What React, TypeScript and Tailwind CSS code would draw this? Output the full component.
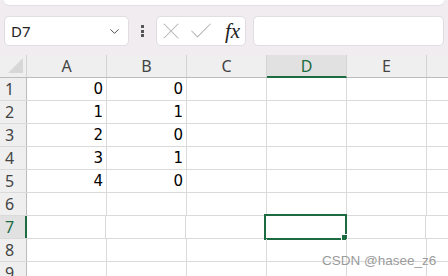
import { ChevronDown, X, Check } from "lucide-react";

const cols = ["A", "B", "C", "D", "E", "F"];
const data: Record<number, [string, string]> = {
  1: ["0", "0"],
  2: ["1", "1"],
  3: ["2", "0"],
  4: ["3", "1"],
  5: ["4", "0"],
};

function HeaderRow() {
  return (
    <div className="flex h-[23px] bg-[#efefef] border-b border-[#bcbcbc]">
      <div className="relative w-[27px] shrink-0 border-r border-[#d4d4d4]">
        <svg className="absolute left-[8px] top-[3px]" width="15" height="15" viewBox="0 0 15 15">
          <polygon points="15,0 15,15 0,15" fill="#d7d7d7" />
        </svg>
      </div>
      {cols.map((c) => (
        <div
          key={c}
          className={
            c === "D"
              ? "w-[80px] shrink-0 -mb-px flex items-center justify-center border-r border-[#d4d4d4] border-b-2 border-b-[#1d6b41] bg-[#e1e1e1] text-[#1d6b41]"
              : "w-[80px] shrink-0 flex items-center justify-center border-r border-[#d4d4d4] text-[#444]"
          }
        >
          {c}
        </div>
      ))}
    </div>
  );
}

function Row({ n }: { n: number }) {
  const vals = data[n];
  const active = n === 7;
  return (
    <div className="flex h-[23px] border-b border-[#dadada] bg-white">
      <div
        className={
          active
            ? "w-[27px] shrink-0 pl-[5px] flex items-center bg-[#e1e1e1] text-[#1d6b41] border-r-2 border-[#1d6b41] -mr-px"
            : "w-[27px] shrink-0 pl-[5px] flex items-center bg-[#efefef] text-[#444] border-r border-[#bcbcbc]"
        }
      >
        {n}
      </div>
      {cols.map((c, i) => (
        <div
          key={c}
          className="relative w-[80px] shrink-0 border-r border-[#dadada] flex items-center justify-end pr-[3px] text-black font-['DejaVu_Sans',sans-serif] text-[15px]"
        >
          {vals && i < 2 ? vals[i] : ""}
          {active && c === "D" && (
            <div className="absolute -left-[2px] -top-[2px] w-[83px] h-[26px] border-2 border-[#1d6b41]">
              <div className="absolute left-[75px] top-[18px] w-[7px] h-[7px] bg-[#1d6b41] border border-white" />
            </div>
          )}
        </div>
      ))}
    </div>
  );
}

export default function App() {
  return (
    <div className="relative w-[448px] h-[276px] overflow-hidden bg-[#f1ecf0] font-['Noto_Sans','Noto_Sans_CJK_SC',sans-serif] text-[16px]">
      <div className="mx-1 h-[5px] rounded-b-[6px] bg-white shadow-[0_1px_1px_rgba(0,0,0,0.06)]" />

      <div className="mt-[11px] flex h-[30px] items-center pl-1 pr-1">
        <div className="flex h-full w-[125px] items-center justify-between rounded-[5px] border border-[#e2dde1] bg-white pl-[6px] pr-[6px]">
          <span className="text-[15px] text-[#222]">D7</span>
          <ChevronDown size={15} strokeWidth={1.4} className="text-[#333]" />
        </div>
        <div className="flex w-[27px] flex-col items-center gap-[1.5px]">
          <div className="h-[3px] w-[3px] bg-[#555]" />
          <div className="h-[3px] w-[3px] bg-[#555]" />
          <div className="h-[3px] w-[3px] bg-[#555]" />
        </div>
        <div className="flex h-full w-[90px] items-center rounded-[5px] border border-[#e2dde1] bg-white">
          <X size={28} strokeWidth={0.9} className="text-[#b4b4b4]" />
          <Check size={28} strokeWidth={0.9} className="ml-[2px] text-[#b4b4b4]" />
          <span className="ml-[10px] font-['Liberation_Serif',serif] text-[21px] italic leading-none text-[#222]">fx</span>
        </div>
        <div className="ml-[7px] h-full flex-1 rounded-[5px] border border-[#e2dde1] bg-white" />
      </div>

      <div className="mt-[9px]">
        <HeaderRow />
        {[1, 2, 3, 4, 5, 6, 7, 8, 9].map((n) => (
          <Row key={n} n={n} />
        ))}
      </div>

      <div className="absolute left-[322px] top-[251px] text-[13.5px] text-[#9a9a9a] font-['Liberation_Sans',sans-serif] [text-shadow:0_0_2px_white]">
        CSDN @hasee_z6
      </div>
    </div>
  );
}
